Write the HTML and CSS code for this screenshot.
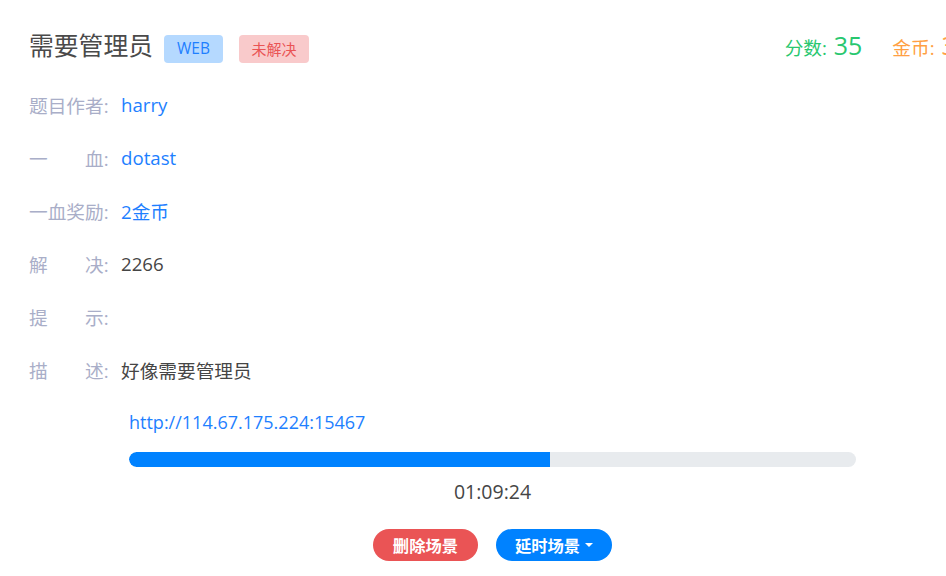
FILE: index.html
```html
<!DOCTYPE html>
<html lang="zh-CN">
<head>
<meta charset="utf-8">
<title>需要管理员</title>
<link rel="stylesheet" href="styles.css">
</head>
<body>
<div class="card">
  <div class="header">
    <span class="title">需要管理员</span>
    <span class="badge badge-web">WEB</span>
    <span class="badge badge-red">未解决</span>
    <div class="scores">
      <span class="score score-green">分数: <span class="num">35</span></span>
      <span class="score score-orange">金币: <span class="num">35</span></span>
    </div>
  </div>
  <div class="info">
    <div class="label">题目作者:</div><div class="value link">harry</div>
    <div class="label">一&emsp;&emsp;血:</div><div class="value link">dotast</div>
    <div class="label">一血奖励:</div><div class="value link">2金币</div>
    <div class="label">解&emsp;&emsp;决:</div><div class="value">2266</div>
    <div class="label">提&emsp;&emsp;示:</div><div class="value"></div>
    <div class="label">描&emsp;&emsp;述:</div><div class="value">好像需要管理员</div>
  </div>
  <div class="launch">
    <div class="url link">http://114.67.175.224:15467</div>
    <div class="bar"><div class="bar-fill" style="width: 57.9%"></div></div>
    <div class="time">01:09:24</div>
    <div class="actions">
      <button class="btn btn-red">删除场景</button>
      <button class="btn btn-blue">延时场景<span class="caret"></span></button>
    </div>
  </div>
</div>
</body>
</html>
```
FILE: styles.css
```css
html, body {
  margin: 0;
  padding: 0;
  background: #ffffff;
  overflow: hidden;
}

body {
  font-family: "Open Sans", "Noto Sans CJK SC", sans-serif;
  font-size: 18.67px;
  color: #454545;
}

.card {
  width: 985px;
  box-sizing: border-box;
  padding: 15px 29px 0;
}

.header {
  display: flex;
  align-items: center;
  height: 63px;
}

.title {
  font-family: "Noto Sans CJK SC", sans-serif;
  font-size: 24.8px;
  color: #4a4a4a;
  line-height: 1;
  margin-right: 11px;
  position: relative;
  top: -2px;
}

.badge {
  display: inline-flex;
  align-items: center;
  height: 28px;
  margin-top: 5px;
  padding: 0 13px;
  border-radius: 4px;
  font-size: 15px;
  line-height: 1;
}

.badge-web {
  background: #b5d9ff;
  color: #1e7fff;
  margin-right: 16px;
  font-size: 15.5px;
}

.badge-red {
  background: #f9cacb;
  color: #ea5455;
  padding: 0 12.5px;
}

.scores {
  margin-left: auto;
  margin-right: -14px;
  display: flex;
  align-items: baseline;
  position: relative;
  top: -2px;
}

.score {
  font-size: 18.67px;
  white-space: nowrap;
}

.score .num {
  font-size: 25px;
  margin-left: 2px;
}

.score-green {
  color: #28c76f;
}

.score-orange {
  color: #ff9f43;
  margin-left: 30px;
}

.info {
  display: grid;
  grid-template-columns: 92px 1fr;
  grid-auto-rows: 53px;
  align-items: center;
}

.label {
  color: #a9aec8;
  white-space: nowrap;
}

.value {
  color: #454545;
}

.link {
  color: #1e7fff;
}

.launch {
  margin: 0 100px;
}

.url {
  height: 54px;
  line-height: 53px;
  font-size: 18px;
}

.bar {
  margin-top: 1.5px;
  height: 15px;
  border-radius: 8px;
  background: #e8ebee;
  overflow: hidden;
}

.bar-fill {
  height: 100%;
  background: #0082ff;
  border-radius: 8px 0 0 8px;
}

.time {
  height: 50px;
  line-height: 50px;
  text-align: center;
  font-size: 19.5px;
  color: #454545;
}

.actions {
  margin-top: 12px;
  display: flex;
  justify-content: center;
  gap: 18px;
}

.btn {
  height: 32px;
  border: none;
  border-radius: 16px;
  padding: 0 20px;
  color: #ffffff;
  font-family: "Noto Sans CJK SC", sans-serif;
  font-weight: 700;
  font-size: 16.3px;
  display: inline-flex;
  align-items: center;
  cursor: pointer;
}

.btn-red {
  background: #ea5455;
}

.btn-blue {
  background: #0082ff;
  padding: 0 19px;
}

.caret {
  display: inline-block;
  width: 0;
  height: 0;
  border-top: 4px solid #ffffff;
  border-left: 4px solid transparent;
  border-right: 4px solid transparent;
  margin-left: 5px;
}
```
